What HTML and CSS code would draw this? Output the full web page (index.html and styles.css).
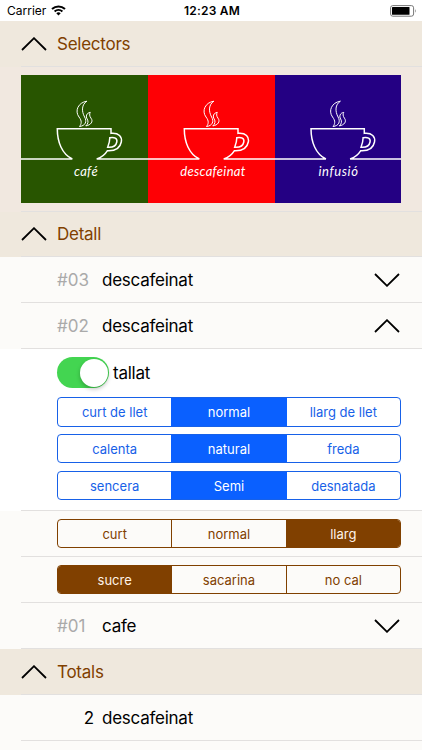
FILE: index.html
```html
<!DOCTYPE html>
<html lang="ca">
<head>
    <meta charset="utf-8">
    <title>Selectors</title>
    <link rel="stylesheet" href="styles.css">
</head>
<body>
    <svg class="defs" width="0" height="0">
        <symbol id="up" viewBox="0 0 26 14"><path d="M1 13L13 1.2L25 13"/></symbol>
        <symbol id="down" viewBox="0 0 26 14"><path d="M1 1L13 12.8L25 1"/></symbol>
        <symbol id="cup" viewBox="0 0 127 128" preserveAspectRatio="none">
            <path d="M0 84H51.3C41 79 36.3 67 36.3 53.7H90V58.3C98 57.5 101.3 62 100.3 67C99 73.5 94 76.2 86.3 75.8C84 79.5 80 82.5 75.7 84H127"/>
            <path d="M88.8 62.7C93.5 61.7 96.6 63.5 95.8 67C95 71 91.5 72.7 86.7 72.3C88 69 88.8 66 88.8 62.7Z"/>
            <path class="steam" d="M65.9 26.2C57 27.5 53.5 36 58 42C61.2 46 60.5 49 58.5 51.5C64.5 50.8 66.2 46.5 63.6 42C60.3 36 60.7 29.5 65.9 26.2ZM69.3 37.4C65.3 38 64.5 41.5 66.2 44C67.7 46.5 67 49 64.8 50.9C70 50 72.5 46.5 70 43.2C68.4 41 68.3 39 69.3 37.4Z"/>
        </symbol>
    </svg>

    <div class="status-bar">
        <div class="carrier">
            <span>Carrier</span>
            <svg class="wifi" width="15" height="11" viewBox="0 0 15 11">
                <path d="M1 4.1C4.8.5 10.2.5 14 4.1M3.6 6.6C5.9 4.5 9.1 4.5 11.4 6.6"/>
                <path class="dot" d="M5.3 8.2Q7.5 6.5 9.7 8.2L7.5 10.5Z"/>
            </svg>
        </div>
        <div class="clock">12:23 AM</div>
        <svg class="battery" width="27" height="12" viewBox="0 0 27 12">
            <rect class="case" x=".6" y=".6" width="23" height="10.6" rx="2.2"/>
            <rect x="2" y="2" width="17.5" height="7.8" rx=".6"/>
            <path class="tip" d="M25 4Q26.8 5.9 25 7.8Z"/>
        </svg>
    </div>

    <div class="row header">
        <svg class="chevron"><use href="#up"/></svg>
        <h2>Selectors</h2>
    </div>
    <div class="row pictures">
        <div class="card green">
            <svg class="cup"><use href="#cup"/></svg>
            <span class="caption">café</span>
        </div>
        <div class="card red">
            <svg class="cup"><use href="#cup"/></svg>
            <span class="caption">descafeinat</span>
        </div>
        <div class="card blue">
            <svg class="cup"><use href="#cup"/></svg>
            <span class="caption short">infusió</span>
        </div>
    </div>

    <div class="row header detail">
        <svg class="chevron"><use href="#up"/></svg>
        <h2>Detall</h2>
    </div>
    <div class="row item">
        <span class="number">#03</span>
        <span class="name">descafeinat</span>
        <svg class="chevron"><use href="#down"/></svg>
    </div>
    <div class="row item">
        <span class="number">#02</span>
        <span class="name">descafeinat</span>
        <svg class="chevron"><use href="#up"/></svg>
    </div>
    <div class="row milk">
        <label class="toggle">
            <span class="switch"></span>
            <span>tallat</span>
        </label>
        <div class="segments">
            <span>curt de llet</span>
            <span class="selected">normal</span>
            <span>llarg de llet</span>
        </div>
        <div class="segments">
            <span>calenta</span>
            <span class="selected">natural</span>
            <span>freda</span>
        </div>
        <div class="segments">
            <span>sencera</span>
            <span class="selected">Semi</span>
            <span>desnatada</span>
        </div>
    </div>
    <div class="row options">
        <div class="segments brown">
            <span>curt</span>
            <span>normal</span>
            <span class="selected">llarg</span>
        </div>
    </div>
    <div class="row options">
        <div class="segments brown">
            <span class="selected">sucre</span>
            <span>sacarina</span>
            <span>no cal</span>
        </div>
    </div>
    <div class="row item">
        <span class="number">#01</span>
        <span class="name">cafe</span>
        <svg class="chevron"><use href="#down"/></svg>
    </div>

    <div class="row header">
        <svg class="chevron"><use href="#up"/></svg>
        <h2>Totals</h2>
    </div>
    <div class="row item total">
        <span class="number">2</span>
        <span class="name">descafeinat</span>
    </div>
</body>
</html>
```

FILE: styles.css
```css
* { box-sizing: border-box; }
body {
    margin: 0;
    height: 750px;
    overflow: hidden;
    background: #fcfbf9;
    color: #000;
    font-family: Inter, "Liberation Sans", sans-serif;
    font-size: 17px;
    letter-spacing: -0.25px;
}
.defs { display: block; }
.status-bar {
    display: grid;
    grid-template-columns: 1fr auto 1fr;
    align-items: center;
    height: 21px;
    padding: 0 5px 0 7px;
    background: white;
    font-size: 12px;
    letter-spacing: 0;
}
.carrier {
    display: flex;
    align-items: center;
    gap: 5px;
}
.wifi path {
    fill: none;
    stroke: #000;
    stroke-width: 2;
}
.wifi .dot { fill: #000; stroke: none; }
.clock {
    font-weight: 600;
    letter-spacing: 0.2px;
}
.battery { justify-self: end; }
.battery .case { fill: none; stroke: #777; stroke-width: 1; }
.battery .tip { fill: #888; }

/* separators start after the left margin */
.row {
    display: flex;
    align-items: center;
    height: 46px;
    padding: 0 21px 1px;
    background: linear-gradient(#e2e0df, #e2e0df) 21px 100% / 100% 1px no-repeat #fcfbf9;
}
.header {
    gap: 10px;
    background-color: #efe8dd;
}
.header h2 {
    margin: 0;
    color: #804000;
    font-size: 17px;
    font-weight: 400;
}
.detail { height: 45px; }
.chevron {
    width: 26px;
    height: 14px;
    fill: none;
    stroke: #000;
    stroke-width: 1.8;
}
.pictures {
    height: 145px;
    background-color: #f1e8e0;
}
.card {
    display: flex;
    flex-direction: column;
    align-items: center;
    width: 127px;
    height: 128px;
    color: white;
}
.card.green { background: #285500; }
.card.red { background: #fe0005; }
.card.blue { width: 126px; background: #240083; }
.cup {
    flex: none;
    width: 100%;
    height: 128px;
    fill: none;
    stroke: white;
    stroke-width: 1.5;
}
.steam { stroke-width: 1; }
.caption {
    margin-top: -42px;
    padding-left: 3px;
    font: italic 13px/20px Lato, sans-serif;
    letter-spacing: 0.3px;
}
.caption.short {
    padding-left: 1px;
    letter-spacing: 0.6px;
}

.item { padding: 0 22px 1px 57px; }
.number {
    width: 45px;
    color: #aaa;
    letter-spacing: 0;
}
.name { flex: 1; }
.total .number {
    width: 37px;
    margin-right: 8px;
    color: #000;
    text-align: right;
}

.milk {
    flex-direction: column;
    align-items: stretch;
    gap: 7.2px;
    height: 162px;
    padding: 8px 21px 0 57px;
    background-color: white;
}
.toggle {
    display: flex;
    align-items: flex-start;
    gap: 4px;
    height: 33px;
    line-height: 32px;
}
.switch {
    display: flex;
    justify-content: flex-end;
    width: 52px;
    height: 31px;
    padding: 1.5px;
    border-radius: 16px;
    background: #43d551;
}
.switch::after {
    content: "";
    width: 28px;
    height: 28px;
    border-radius: 50%;
    background: white;
    box-shadow: 0 2px 4px rgba(0,0,0,0.25);
}
.segments {
    display: flex;
    flex: none;
    width: 344px;
    height: 29.5px;
    border: 1px solid currentColor;
    border-radius: 4px;
    overflow: hidden;
    color: #1761e8;
    font-size: 13px;
    letter-spacing: 0;
}
.segments span {
    flex: 1;
    line-height: 28px;
    text-align: center;
}
.segments span + span { border-left: 1px solid #0a60ff; }
.segments .selected {
    background: #0a60ff;
    color: white;
}
.options { padding-left: 57px; }
.segments.brown { color: #804000; }
.brown span + span { border-color: #804000; }
.brown .selected {
    background: #804000;
    color: #fff3e8;
}
```
